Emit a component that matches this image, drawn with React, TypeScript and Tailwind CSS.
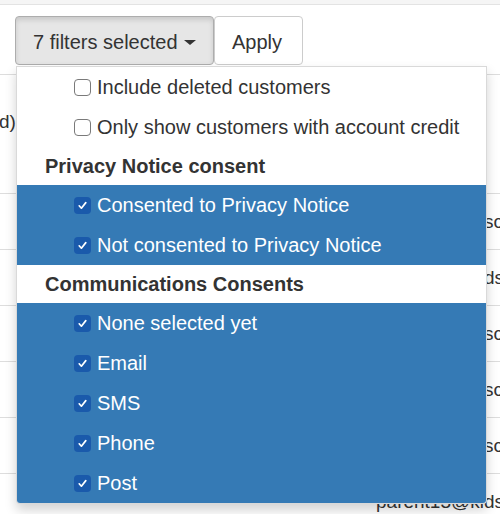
import React from "react"

const rows = [
  "parent9@kidsclub.com",
  "parent12@kidsclub.com",
  "parent7@kidsclub.com",
  "parent5@kidsclub.com",
  "parent3@kidsclub.com",
  "parent13@kidsclub.com",
]

interface Item {
  label: string
  checked: boolean
}

const general: Item[] = [
  { label: "Include deleted customers", checked: false },
  { label: "Only show customers with account credit", checked: false },
]

const privacy: Item[] = [
  { label: "Consented to Privacy Notice", checked: true },
  { label: "Not consented to Privacy Notice", checked: true },
]

const comms: Item[] = [
  { label: "None selected yet", checked: true },
  { label: "Email", checked: true },
  { label: "SMS", checked: true },
  { label: "Phone", checked: true },
  { label: "Post", checked: true },
]

const Checkbox = ({ checked }: { checked: boolean }) =>
  checked ? (
    <span className="flex h-[17px] w-[17px] shrink-0 items-center justify-center rounded-[4px] bg-[#1a5aab]">
      <svg width="11" height="11" viewBox="0 0 11 11">
        <path
          d="M2.2 5.8 L4.4 8.2 L8.8 2.6"
          fill="none"
          stroke="white"
          strokeWidth="1.7"
          strokeLinecap="round"
          strokeLinejoin="round"
        />
      </svg>
    </span>
  ) : (
    <span className="h-[17px] w-[17px] shrink-0 rounded-[4px] border border-[#7a7a7a] bg-white" />
  )

const MenuItem = ({ item }: { item: Item }) => (
  <div
    className={`flex h-[40px] items-center gap-[6px] pl-[57px] ${
      item.checked ? "bg-[#357ab5] text-white" : "text-[#333]"
    }`}
  >
    <Checkbox checked={item.checked} />
    <span>{item.label}</span>
  </div>
)

const MenuHeader = ({ children }: { children: React.ReactNode }) => (
  <div className="flex h-[38px] items-center pl-[28px] font-bold text-[#333]">
    {children}
  </div>
)

export default function App() {
  return (
    <div className="relative h-[514px] w-[500px] overflow-hidden bg-white font-['Liberation_Sans',Arial,sans-serif] text-[20px] leading-[28px] text-[#333]">
      {/* top strip */}
      <div className="h-[5px] border-b border-[#e3e3e3] bg-[#f5f5f5]" />

      {/* toolbar */}
      <div className="ml-[15px] mt-[11px] flex">
        <button className="flex h-[49px] w-[199px] items-center rounded-[4px] border border-[#adadad] bg-[#e6e6e6] pl-[17px] pt-[2px] shadow-[inset_0_3px_5px_rgba(0,0,0,0.125)]">
          7 filters selected
          <span className="ml-[6px] mt-[2px] h-0 w-0 border-x-[6px] border-t-[5px] border-x-transparent border-t-[#333]" />
        </button>
        <button className="h-[49px] w-[89px] rounded-[4px] border border-[#ccc] bg-white pl-[17px] pt-[2px] text-left">
          Apply
        </button>
      </div>

      {/* table behind */}
      <div className="mt-[9px] border-t border-[#ddd] text-[19px]">
        <div className="h-[118px] pt-[33px]">
          <span className="ml-[-1px] text-[#333]">d)</span>
        </div>
        {rows.map((r) => (
          <div
            key={r}
            className="flex h-[56px] items-center border-t border-[#ddd] pl-[376px] whitespace-nowrap"
          >
            {r}
          </div>
        ))}
      </div>

      {/* dropdown menu */}
      <div className="absolute left-[16px] top-[66px] w-[471px] overflow-hidden rounded-b-[4px] border border-black/15 bg-white shadow-[0_6px_12px_rgba(0,0,0,0.175)]">
        {general.map((i) => (
          <MenuItem key={i.label} item={i} />
        ))}
        <MenuHeader>Privacy Notice consent</MenuHeader>
        {privacy.map((i) => (
          <MenuItem key={i.label} item={i} />
        ))}
        <MenuHeader>Communications Consents</MenuHeader>
        {comms.map((i) => (
          <MenuItem key={i.label} item={i} />
        ))}
      </div>
    </div>
  )
}
